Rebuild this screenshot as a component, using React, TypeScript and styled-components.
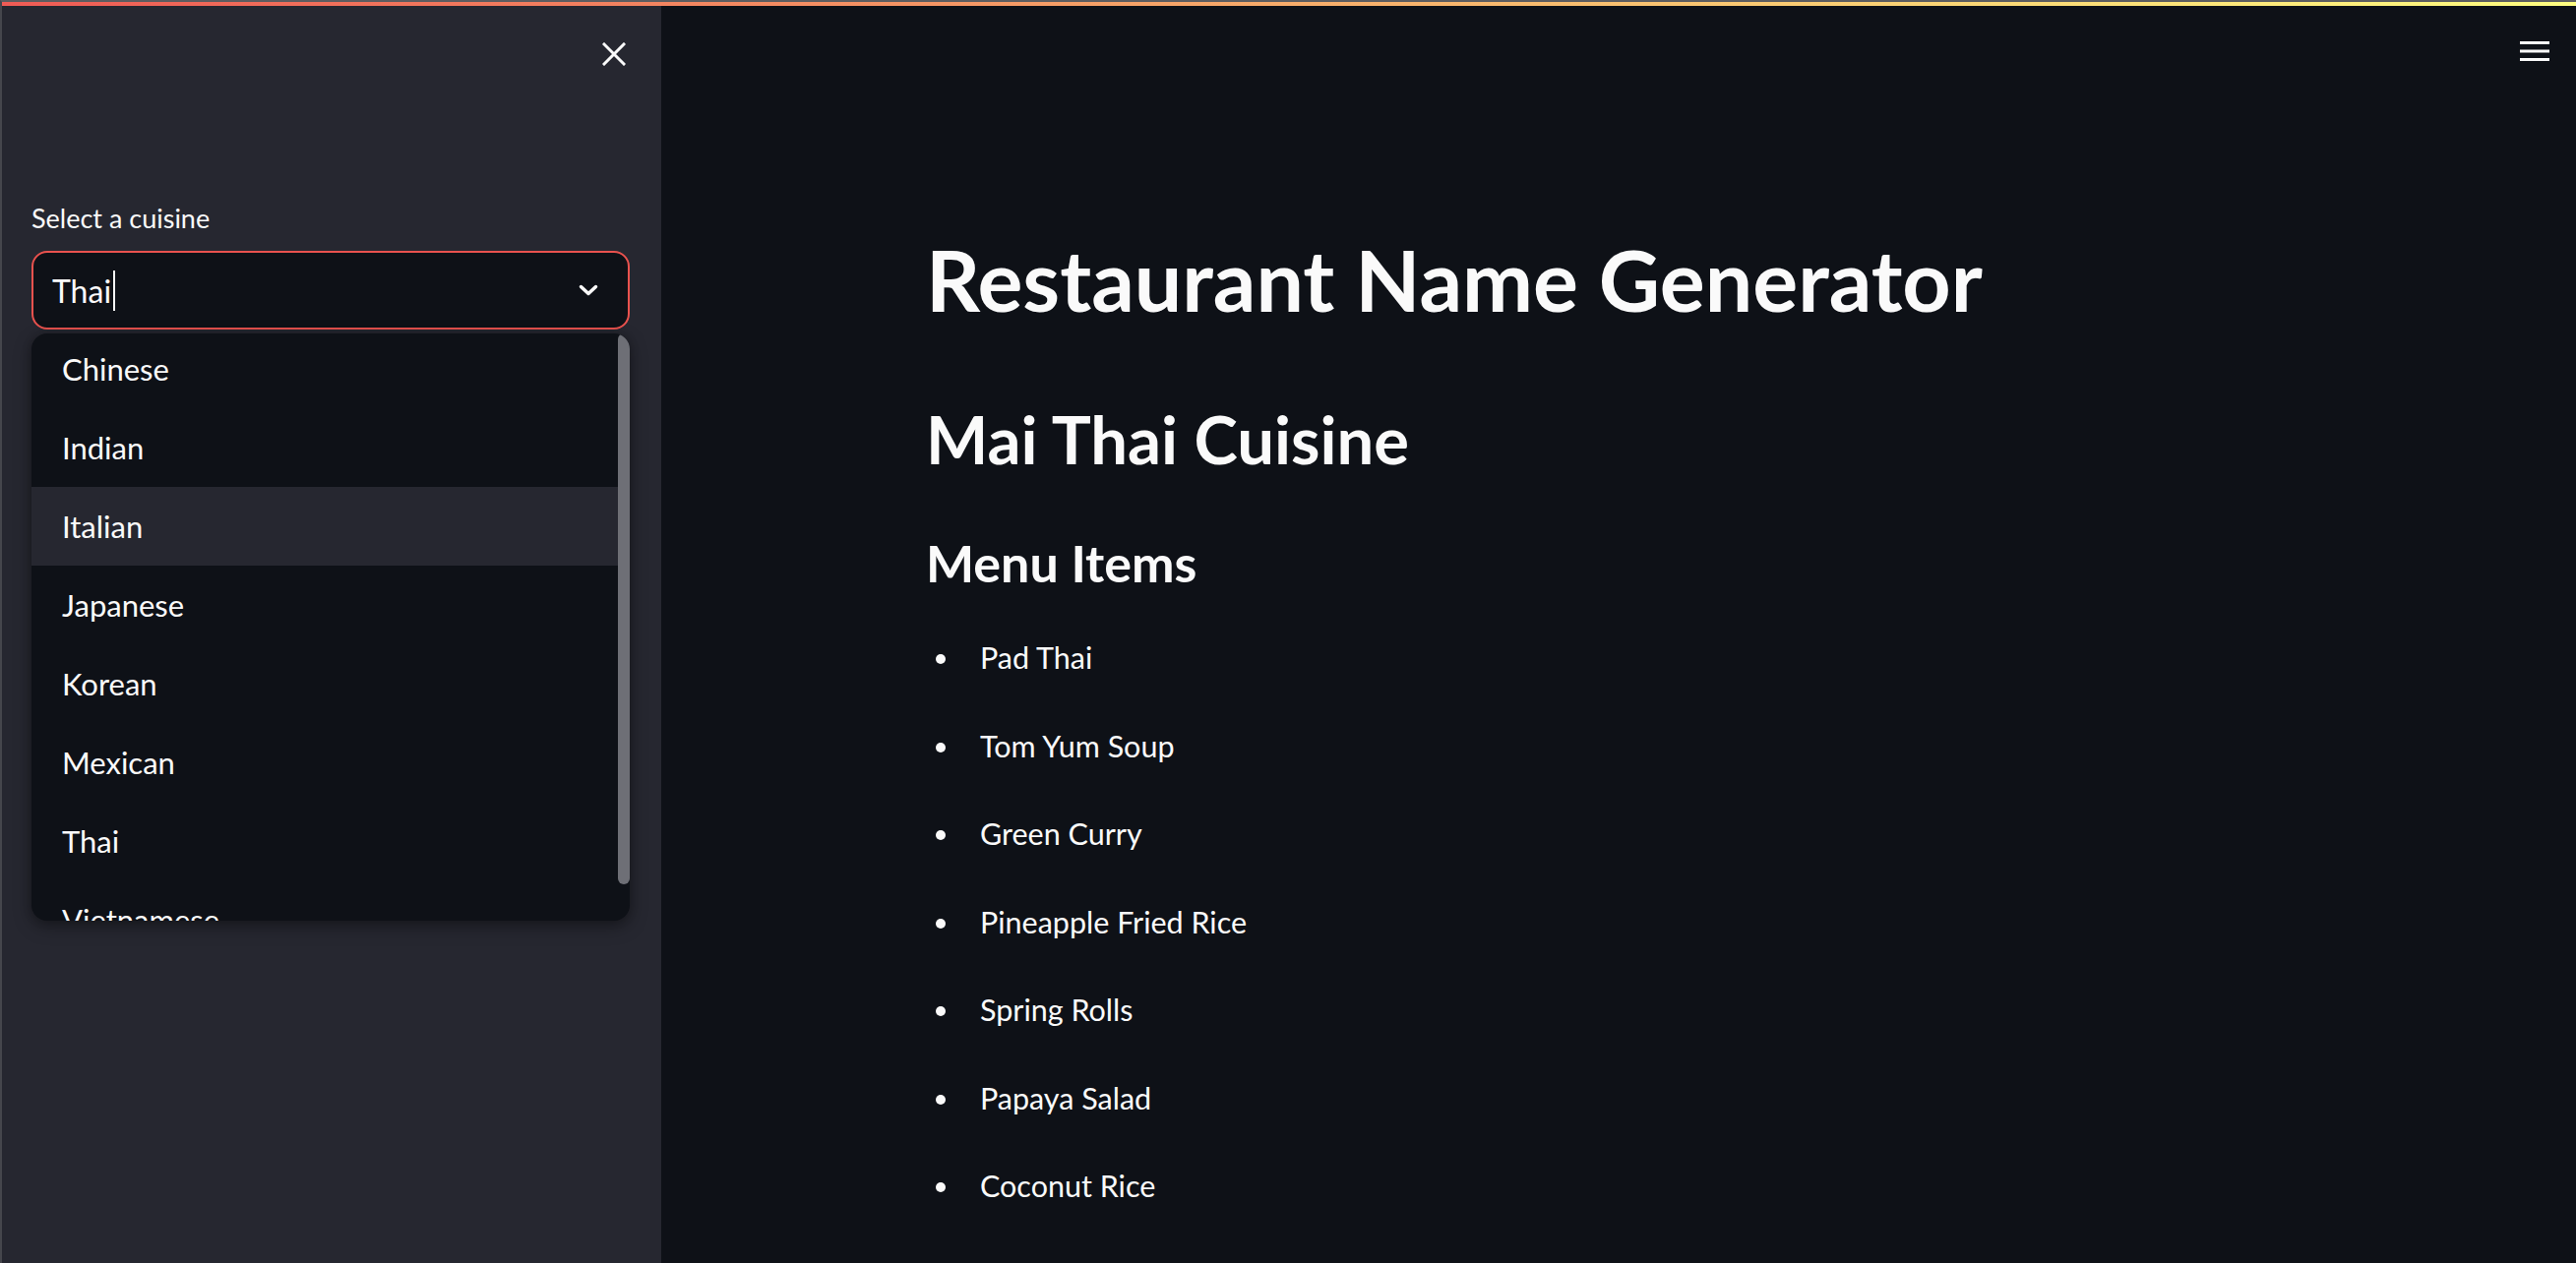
import React from "react";
import styled, { createGlobalStyle } from "styled-components";

const Global = createGlobalStyle`
  html, body { margin: 0; padding: 0; background: #0e1117; }
  body { font-family: Lato, "Noto Sans", sans-serif; color: #fafafa; overflow: hidden; }
  * { box-sizing: border-box; }
`;

const Frame = styled.div`
  width: 2618px;
  height: 1284px;
  display: flex;
  flex-direction: column;
  border-top: 2px solid #5d5d60;
  border-left: 2px solid #45464c;
  background: #0e1117;
  overflow: hidden;
`;

const Decoration = styled.div`
  height: 4px;
  flex: none;
  background: linear-gradient(90deg, #ef5b55, #fffd80);
`;

const Body = styled.div`
  flex: 1;
  display: grid;
  grid-template-columns: 670px 1fr;
  min-height: 0;
`;

const Sidebar = styled.aside`
  background: #262730;
  padding: 37px 32px 0 30px;
  display: flex;
  flex-direction: column;
`;

const CloseRow = styled.div`
  display: flex;
  justify-content: flex-end;
  padding-right: 4px;
  height: 24px;
`;

const Field = styled.div`
  margin-top: 130px;
  display: flex;
  flex-direction: column;
`;

const Label = styled.label`
  height: 48px;
  display: flex;
  align-items: center;
  font-size: 27px;
  color: #fafafa;
  margin-bottom: 10px;
`;

const SelectBox = styled.div`
  height: 80px;
  width: 608px;
  border: 2px solid #e9524e;
  border-radius: 16px;
  background: #0e1117;
  display: flex;
  align-items: center;
  padding: 0 30px 0 19px;
`;

const SelectValue = styled.div`
  flex: 1;
  display: flex;
  align-items: center;
  font-size: 32px;
  color: #fafafa;
`;

const Caret = styled.span`
  display: inline-block;
  width: 2px;
  height: 41px;
  background: #fafafa;
  margin-left: 2px;
`;

const Dropdown = styled.div`
  margin-top: 4px;
  width: 608px;
  height: 597px;
  border-radius: 16px;
  background: #0e1117;
  box-shadow: 0 6px 18px rgba(0, 0, 0, 0.35), 0 0 10px rgba(0, 0, 0, 0.2);
  display: grid;
  grid-template-columns: 1fr 12px;
  overflow: hidden;
`;

const OptionList = styled.ul`
  list-style: none;
  margin: -4px 0 0;
  padding: 0;
`;

const Option = styled.li<{ $active?: boolean }>`
  height: 80px;
  display: flex;
  align-items: center;
  padding-left: 31px;
  font-size: 31px;
  color: #fafafa;
  background: ${(p) => (p.$active ? "#262730" : "transparent")};
`;

const ScrollTrack = styled.div`
  display: flex;
  flex-direction: column;
`;

const ScrollThumb = styled.div`
  height: 560px;
  border-radius: 6px;
  background: #6e6f76;
`;

const Main = styled.main`
  display: flex;
  flex-direction: column;
  min-width: 0;
`;

const MainHeader = styled.header`
  display: flex;
  justify-content: flex-end;
  padding: 36px 27px 0 0;
  height: 56px;
`;

const Content = styled.section`
  width: 1472px;
  margin: 0 auto;
  padding: 170px 32px 0;
  display: flex;
  flex-direction: column;
`;

const Title = styled.h1`
  margin: 0;
  font-size: 86px;
  line-height: 104px;
  font-weight: 700;
  color: #fafafa;
`;

const Subtitle = styled.h2`
  margin: 70px 0 0;
  font-size: 67px;
  line-height: 80px;
  font-weight: 700;
  color: #fafafa;
`;

const Section = styled.h3`
  margin: 54px 0 0;
  font-size: 52px;
  line-height: 64px;
  font-weight: 700;
  color: #fafafa;
`;

const Menu = styled.ul`
  list-style: none;
  margin: 40px 0 0;
  padding: 0;
  display: flex;
  flex-direction: column;
  gap: 41.5px;
`;

const MenuItem = styled.li`
  display: flex;
  align-items: center;
  height: 48px;
  font-size: 30.5px;
  color: #fafafa;
  &::before {
    content: "";
    width: 10px;
    height: 10px;
    border-radius: 50%;
    background: #fafafa;
    margin: 4px 35px 0 10px;
    flex: none;
  }
`;

const cuisines = ["Chinese", "Indian", "Italian", "Japanese", "Korean", "Mexican", "Thai", "Vietnamese"];
const menu = [
  "Pad Thai",
  "Tom Yum Soup",
  "Green Curry",
  "Pineapple Fried Rice",
  "Spring Rolls",
  "Papaya Salad",
  "Coconut Rice",
];

export default function App() {
  return (
    <>
      <Global />
      <Frame>
        <Decoration />
        <Body>
          <Sidebar>
            <CloseRow>
              <svg width="24" height="24" viewBox="0 0 24 24">
                <path d="M2 2 L22 22 M22 2 L2 22" stroke="#fafafa" strokeWidth="3" strokeLinecap="square" fill="none" />
              </svg>
            </CloseRow>
            <Field>
              <Label>Select a cuisine</Label>
              <SelectBox>
                <SelectValue>
                  Thai
                  <Caret />
                </SelectValue>
                <svg width="20" height="12" viewBox="0 0 20 12">
                  <path d="M2.5 2.5 L10 9.5 L17.5 2.5" stroke="#fafafa" strokeWidth="3.5" strokeLinecap="round" strokeLinejoin="round" fill="none" />
                </svg>
              </SelectBox>
              <Dropdown>
                <OptionList>
                  {cuisines.map((c) => (
                    <Option key={c} $active={c === "Italian"}>
                      {c}
                    </Option>
                  ))}
                </OptionList>
                <ScrollTrack>
                  <ScrollThumb />
                </ScrollTrack>
              </Dropdown>
            </Field>
          </Sidebar>
          <Main>
            <MainHeader>
              <svg width="30" height="20" viewBox="0 0 30 20">
                <rect x="0" y="0" width="30" height="3" fill="#fafafa" />
                <rect x="0" y="8.5" width="30" height="3" fill="#fafafa" />
                <rect x="0" y="17" width="30" height="3" fill="#fafafa" />
              </svg>
            </MainHeader>
            <Content>
              <Title>Restaurant Name Generator</Title>
              <Subtitle>Mai Thai Cuisine</Subtitle>
              <Section>Menu Items</Section>
              <Menu>
                {menu.map((m) => (
                  <MenuItem key={m}>{m}</MenuItem>
                ))}
              </Menu>
            </Content>
          </Main>
        </Body>
      </Frame>
    </>
  );
}
